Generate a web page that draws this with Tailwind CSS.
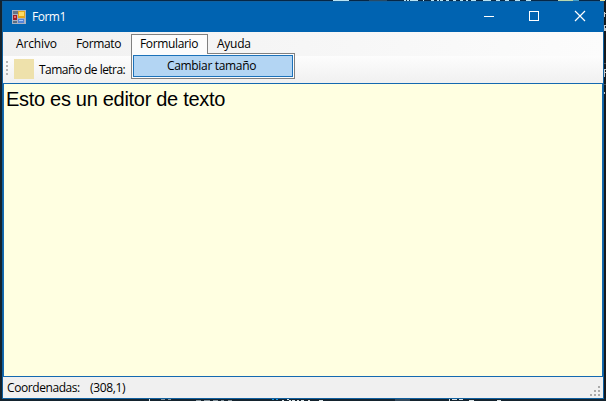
<!DOCTYPE html>
<html lang="es">
<head>
<meta charset="utf-8">
<title>Form1</title>
<script src="https://cdn.jsdelivr.net/npm/@tailwindcss/browser@4"></script>
</head>
<body class="w-[606px] h-[401px] overflow-hidden bg-[#14232e] relative font-['Open_Sans','Noto_Sans',sans-serif] text-[12px] text-black">
<!-- Desktop slivers around the window -->
<svg class="absolute inset-0" width="606" height="401" shape-rendering="crispEdges">
  <rect width="606" height="1" fill="#062746"/>
  <path d="M333 .5h16M404 .5h2M407 .5h2M410 .5h8M423 .5h1M431 .5h3M437 .5h2M440 .5h3M446 .5h3M453 .5h3M460 .5h3M466 .5h2M471 .5h5M483 .5h8M496 .5h4M505 .5h4M515 .5h5M526 .5h5" stroke="#b9e4f4"/>
  <path d="M369 .5h18" stroke="#274a66"/><path d="M558 .5h15" stroke="#b8d8b0"/><path d="M573 .5h6" stroke="#3c9ccc"/><path d="M600 .5h5" stroke="#e8e4a0"/>
  <rect x="604" y="2" width="2" height="396" fill="#15191d"/>
  <path d="M604.500 12v5M605.500 13v1M604.500 25v6M605.500 25v1M605.500 28v3M604.500 69v8M605.500 69v1M605.500 72v1M604.500 92v2" stroke="#c8c8c8"/>
  <path d="M604 63.5h2M604 84.5h2" stroke="#555"/>
  <path d="M149.500 399v2M282 400.5h2M289 400.5h2M292 400.5h3M297 400.5h2M301 400.5h3M308 400.5h2M319 400.5h4M287 399.500h2" stroke="#d8e2e6"/>
  <path d="M161 399.500h4M168 399.500h3M196 400.500h5M204 400.500h6M213 400.500h5M221 400.500h3M228 400.500h4" stroke="#83929b"/>
  <path d="M272 399.500h2M276 399.500h2" stroke="#1591df"/>
  <path d="M395 399.500h15" stroke="#34495a" stroke-width="3"/>
  <path d="M449.500 399v2M452 399.500h5M459 399.500h4M469 400.500h5M497 400.500h4" stroke="#d8e2e6"/>
</svg>

<div class="ml-[2px] mt-px w-[602px] h-[398px] flex flex-col border border-[#10609f] bg-[#f0f0f0] relative">
  <header class="h-[30px] shrink-0 bg-[#0063b1] flex items-center pl-[9px] text-white">
    <svg width="14" height="14" viewBox="0 0 14 14" shape-rendering="crispEdges">
      <rect width="14" height="14" fill="#a9b2c2"/>
      <rect x="1" y="1" width="5" height="3" fill="#667687"/><rect x="6" y="1" width="7" height="7" fill="#e5a719"/><rect x="7" y="2" width="5" height="4" fill="#ffdc62"/>
      <rect x="1" y="5" width="4" height="5" fill="#9c1f28"/><rect x="2" y="6" width="2" height="2" fill="#e76d67"/>
      <rect x="1" y="11" width="4" height="2" fill="#596b80"/><rect x="6" y="9" width="6" height="4" fill="#5484d8"/><rect x="7" y="10" width="4" height="1" fill="#a9caff"/>
    </svg>
    <span class="ml-[6px] w-[38px] tracking-[-0.5px] leading-4">Form1</span>
    <div class="ml-auto mr-px flex items-center">
      <svg width="120" height="30" fill="none" stroke="#fff" stroke-width="1">
        <path d="M2 14.500h10M47.500 9.500h9v9h-9z" shape-rendering="crispEdges"/>
        <path d="M93 9l10 10M103 9L93 19" stroke-width="1.200"/>
      </svg>
    </div>
  </header>

  <nav class="h-6 shrink-0 flex pt-[2px] leading-[20px] bg-linear-to-r from-[#f0f0f0] to-[#fcfcfc]">
    <span class="ml-[13px] w-[60px] tracking-[-0.15px]">Archivo</span>
    <span class="w-[55px] tracking-[-0.35px]">Formato</span>
    <span class="w-[77px] h-[22px] border border-b-0 border-[#808080] bg-[#fcfcfc] pl-2 leading-[18px] tracking-[-0.35px]">Formulario</span>
    <span class="ml-[9px] tracking-[-0.25px]">Ayuda</span>
  </nav>

  <div class="h-[27px] shrink-0 flex items-center bg-linear-to-b from-[#fdfdfd] to-[#f0f0f0] pl-[3px]">
    <svg width="3" height="18" fill="#b5b5b5" shape-rendering="crispEdges"><path d="M0 0h2v2H0zM0 4h2v2H0zM0 8h2v2H0zM0 12h2v2H0z"/></svg>
    <span class="ml-[5px] size-5 bg-[#eee1ab] relative -top-px"></span>
    <span class="ml-[5px] w-[90px] whitespace-nowrap tracking-[-0.53px]">Tamaño de letra:</span>
  </div>

  <main class="h-[294px] shrink-0 border border-[#1469b0] bg-[#ffffe1] pl-[2px] pt-[3px] font-['Liberation_Sans',Arial,sans-serif] text-[20px] leading-[25px] tracking-[-0.3px]">Esto es un editor de texto</main>

  <footer class="flex-1 flex items-center pl-1">
    <span class="w-[83px] tracking-[-0.42px]">Coordenadas:</span>
    <span class="tracking-[-0.35px]">(308,1)</span>
    <svg class="ml-auto mr-[3px] self-end mb-[2px]" width="10" height="10" fill="#aaa" shape-rendering="crispEdges"><path d="M8 0h2v2H8zM8 4h2v2H8zM8 8h2v2H8zM4 4h2v2H4zM4 8h2v2H4zM0 8h2v2H0z"/></svg>
  </footer>

  <!-- Open Formulario menu -->
  <div class="absolute left-[128px] top-[51px] w-[164px] h-[26px] border border-[#808080] bg-[#fcfcfc] p-px">
    <div class="h-[22px] border border-[#1c72ba] bg-[#b3d5f3] pl-[33px] leading-[20px] tracking-[-0.33px]">Cambiar tamaño</div>
    <div class="absolute left-0 -top-px w-[75px] h-px bg-[#fcfcfc]"></div>
  </div>
</div>
</body>
</html>
